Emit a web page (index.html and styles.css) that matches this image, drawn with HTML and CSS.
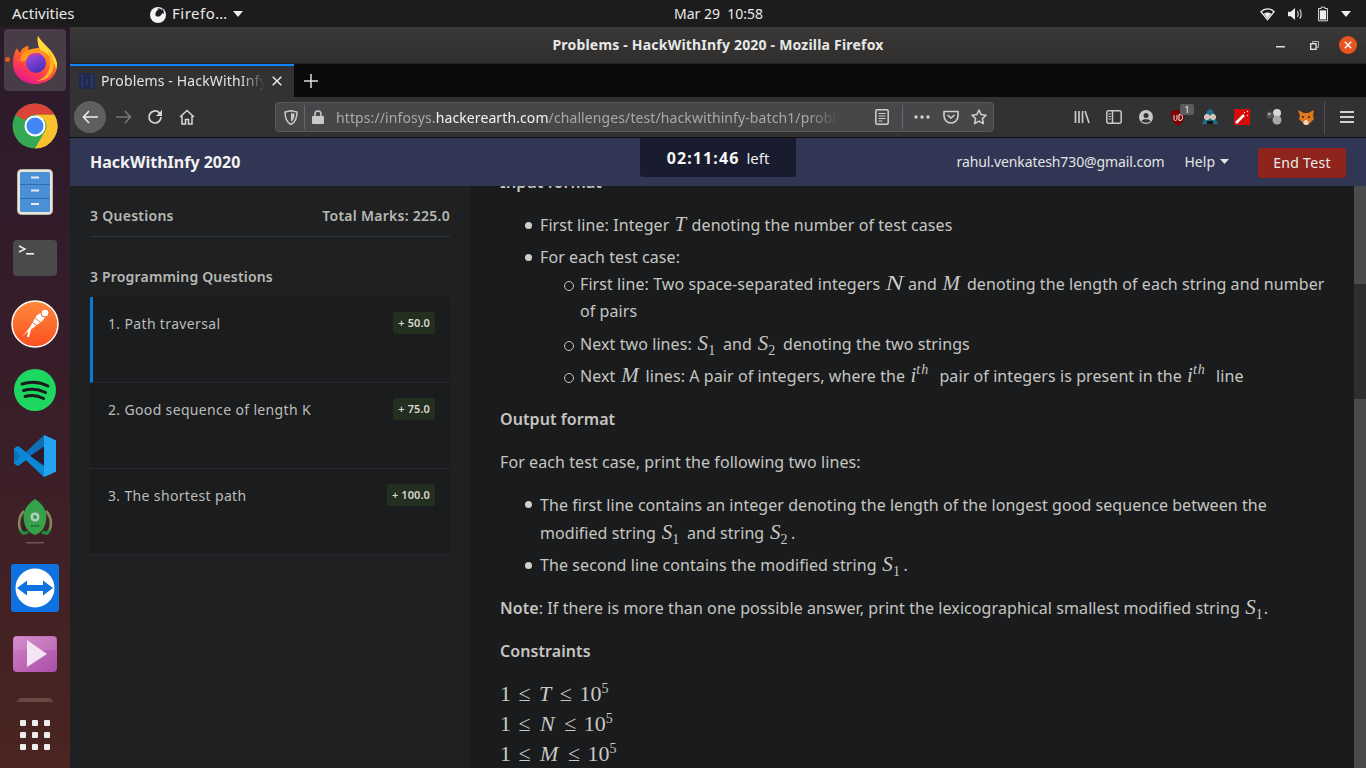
FILE: index.html
```html
<!DOCTYPE html>
<html lang="en">
<head>
<meta charset="utf-8">
<title>Problems - HackWithInfy 2020 - Mozilla Firefox</title>
<link rel="stylesheet" href="styles.css">
</head>
<body>
<header class="topbar">
  <div class="tb-left">
    <span class="tb-activities">Activities</span>
    <span class="tb-app">
      <svg width="20" height="20" viewBox="0 0 20 20"><circle cx="10" cy="11" r="8" fill="#f2f2f2"/><path d="M10 1c3 1 4 3 4 5-1-1-3-2-5-1l2 1c-2 0-3 1-3 3s2 3 3 3 3-1 3-3l2 1c0-3-1-5-3-6 0-1-1-2-3-4z" fill="#1d1d1d"/><circle cx="10" cy="10" r="2.6" fill="#1d1d1d"/></svg>
      <span class="tb-appname">Firefo…</span>
      <svg width="10" height="6" viewBox="0 0 10 6"><path d="M0 0h10L5 6z" fill="#eee"/></svg>
    </span>
  </div>
  <div class="tb-clock">Mar 29&nbsp; 10:58</div>
  <div class="tb-right">
    <svg width="15" height="14" viewBox="0 0 16 14"><path d="M1 4.500C3 2.500 5 1.500 8 1.500s5 1 7 3L8 13z" fill="none" stroke="#eee" stroke-width="1.500"/><path d="M4 6.500C5.500 5.700 6.500 5.300 8 5.300s2.500.4 4 1.200L8 11.500z" fill="#eee"/></svg>
    <svg width="15" height="14" viewBox="0 0 16 14"><path d="M0 4.500h3L7.500 .5v13L3 9.500H0z" fill="#eee"/><path d="M10 4c1.200 1.500 1.200 4.500 0 6M12.500 2c2 2.500 2 7.500 0 10" fill="none" stroke="#ddd" stroke-width="1.200"/></svg>
    <svg width="10" height="16" viewBox="0 0 11 16"><path d="M3.500 .5h4v1.500h3v13.500H.5V2h3z" fill="none" stroke="#eee"/><rect x="2" y="4" width="7" height="10" fill="#eee"/></svg>
    <svg width="10" height="6" viewBox="0 0 10 6"><path d="M0 0h10L5 6z" fill="#eee"/></svg>
  </div>
</header>

<div class="desktop">
  <nav class="dock">
    <div class="dock-list">
      <div class="dock-item dock-active">
        <span class="dock-dot"></span>
        <svg width="46" height="48" viewBox="0 0 46 48">
          <defs>
            <linearGradient id="ffa" x1="0.85" y1="0.05" x2="0.4" y2="1"><stop offset="0" stop-color="#ffb52a"/><stop offset=".45" stop-color="#ff7a1c"/><stop offset=".75" stop-color="#ff3a50"/><stop offset="1" stop-color="#e81a8c"/></linearGradient>
            <linearGradient id="ffb" x1="0.2" y1="0" x2="0.7" y2="1"><stop offset="0" stop-color="#9a4ce0"/><stop offset="1" stop-color="#4b2db8"/></linearGradient>
          </defs>
          <path d="M26 0C30 8 42 14 45 27 46 40 36 48 23 48 10 48 0 38 1 26 1 20 3 15 5 12 6 15 7 16 8 17 9 13 13 10 17 10 16 12 16 14 17 15 20 12 24 12 27 12 26 8 25 4 26 0z" fill="url(#ffa)"/>
          <path d="M26 0C30 8 42 14 45 27 45 29 45 31 44 33 42 22 34 16 28 14 26 9 25 4 26 0z" fill="#ffd83a"/>
          <path d="M36 14C42 20 44 30 39 38 36 43 30 45 25 45 33 42 38 36 38 28 38 22 37 18 36 14z" fill="#ffb224"/>
          <circle cx="24" cy="27" r="10" fill="url(#ffb)"/>
          <path d="M15 22C18 17 27 15 32 20 27 19 21 20 15 22z" fill="#c13ba8"/>
          <path d="M8 24C9 17 15 13 22 13 27 13 33 17 34 22 30 17 26 16 22 17 18 17 16 20 14 24 12 26 10 26 8 24z" fill="#ff9a1f"/>
        </svg>
      </div>
      <div class="dock-item">
        <svg width="46" height="46" viewBox="0 0 46 46">
          <circle cx="23" cy="23" r="22.500" fill="#34a853"/>
          <path d="M23 .5A22.500 22.500 0 0 1 42.500 11.750H23A11.250 11.250 0 0 0 13.300 17.400L3.500 11.900A22.500 22.500 0 0 1 23 .5z" fill="#db4437"/>
          <path d="M42.500 11.750A22.500 22.500 0 0 1 23 45.500L32.800 28.600A11.250 11.250 0 0 0 32.800 17.400L23 11.750z" fill="#fbc02d"/>
          <circle cx="23" cy="23" r="10.500" fill="#fff"/><circle cx="23" cy="23" r="8.500" fill="#4285f4"/>
        </svg>
      </div>
      <div class="dock-item">
        <svg width="36" height="46" viewBox="0 0 36 46">
          <rect x=".5" y=".5" width="35" height="45" rx="4" fill="#e9e5da" stroke="#bdb8aa"/>
          <rect x="3" y="3" width="30" height="40" rx="1.500" fill="#4a90d9"/>
          <path d="M3 15.500h30M3 29.500h30" stroke="#2f6cb0"/>
          <rect x="14" y="7.500" width="8" height="2" fill="#e6eef8"/><rect x="14" y="20.500" width="8" height="2" fill="#e6eef8"/><rect x="14" y="34" width="8" height="2" fill="#e6eef8"/>
        </svg>
      </div>
      <div class="dock-item">
        <svg width="44" height="36" viewBox="0 0 44 36">
          <rect width="44" height="36" rx="4" fill="#4a4a4a"/>
          <path d="M6 6l6 3-6 3" fill="none" stroke="#eee" stroke-width="1.400"/><rect x="13" y="13" width="8" height="1.600" fill="#eee"/>
        </svg>
      </div>
      <div class="dock-item">
        <svg width="48" height="48" viewBox="0 0 48 48">
          <defs><linearGradient id="pm" x1="0" y1="0" x2="0" y2="1"><stop offset="0" stop-color="#ff8a3c"/><stop offset="1" stop-color="#fb4f20"/></linearGradient></defs>
          <circle cx="24" cy="24" r="23" fill="url(#pm)" stroke="#fff" stroke-width="1.500"/>
          <path d="M11 37l8-10 5-9c2-4 6-6 10-5 1 3-1 7-4 9l-8 6-7 5z" fill="#fff"/>
          <circle cx="34" cy="13" r="4" fill="#fff" stroke="#fb6a2c"/>
          <path d="M21 22l7 5M24 18l6 5" stroke="#fb6a2c"/><path d="M19 29l-2 8" stroke="#fff" stroke-width="2"/>
        </svg>
      </div>
      <div class="dock-item">
        <svg width="42" height="42" viewBox="0 0 42 42">
          <circle cx="21" cy="21" r="21" fill="#1ed760"/>
          <path d="M8 15c8-2.500 18-2 26 2M9.500 21.500c7-2 15-1.500 22 2M11 27.500c6-1.500 13-1 18.500 2" fill="none" stroke="#1b1b1b" stroke-width="3" stroke-linecap="round"/>
        </svg>
      </div>
      <div class="dock-item">
        <svg width="42" height="42" viewBox="0 0 42 42">
          <path d="M30 0l12 5.500v31L30 42 12 25 4 31 0 28.500V13.500L4 11l8 6z" fill="#0f6fb8"/>
          <path d="M30 0l12 5.500v31L30 42z" fill="#24a3f2"/>
          <path d="M30 11.500L16 21l14 9.500z" fill="#2b1a2a"/>
          <path d="M0 13.500L4 11l26 21-0 10L12 25 4 31 0 28.500l6-7.500z" fill="#0b87d6"/>
        </svg>
      </div>
      <div class="dock-item">
        <svg width="36" height="46" viewBox="0 0 36 46">
          <path d="M7 12C1 18 0 30 7 35M29 12c6 6 7 18 0 23" fill="none" stroke="#7f8a5c" stroke-width="2.500"/>
          <path d="M18 0c8 5 13 13 11 22-1 7-5 12-11 14C12 34 8 29 7 22 5 13 10 5 18 0z" fill="#35a24a"/>
          <path d="M3 31c2 3 5 4 8 2M33 31c-2 3-5 4-8 2" fill="none" stroke="#1f8f3e" stroke-width="3"/>
          <circle cx="18" cy="18" r="5" fill="#a5d8b0" stroke="#5c8f6c"/><circle cx="18" cy="18" r="2" fill="#3d8f5a"/>
          <path d="M14 27h8" stroke="#1d5c2e" stroke-width="1.500" stroke-dasharray="2 1"/>
          <rect x="9" y="43" width="18" height="1.500" rx=".7" fill="#6d5560"/>
        </svg>
      </div>
      <div class="dock-item">
        <svg width="48" height="48" viewBox="0 0 48 48">
          <rect width="48" height="48" rx="3" fill="#0e72e0"/><circle cx="24" cy="24" r="19.500" fill="#fff"/>
          <path d="M6 24l10-7.500v4.500h16v-4.500L42 24l-10 7.500V27H16v4.500z" fill="#0e72e0"/>
        </svg>
      </div>
      <div class="dock-item">
        <svg width="44" height="36" viewBox="0 0 44 36">
          <defs><linearGradient id="vd" x1="0" y1="0" x2="1" y2="1"><stop offset="0" stop-color="#d381c6"/><stop offset="1" stop-color="#a94fa8"/></linearGradient></defs>
          <rect width="44" height="36" rx="4" fill="url(#vd)"/>
          <path d="M1 14h42V4a3 3 0 0 0-3-3H4a3 3 0 0 0-3 3z" fill="#fff" opacity=".1"/>
          <path d="M14 4l20 14-20 13z" fill="#f5e4f3"/>
        </svg>
      </div>
      <div class="dock-item"><span class="dock-sliver"></span></div>
    </div>
    <div class="dock-apps">
      <i></i><i></i><i></i><i></i><i></i><i></i><i></i><i></i><i></i>
    </div>
  </nav>

  <div class="window">
    <div class="titlebar">
      <span class="title">Problems - HackWithInfy 2020 - Mozilla Firefox</span>
      <div class="wincontrols">
        <svg width="9" height="2" viewBox="0 0 9 2"><rect width="9" height="1.500" fill="#ddd"/></svg>
        <svg width="9" height="9" viewBox="0 0 10 10"><path d="M3 2.500V.5h6.500V7H7.500" fill="none" stroke="#ccc"/><rect x=".75" y="3" width="6" height="6.250" fill="none" stroke="#eee" stroke-width="1.400"/></svg>
        <svg width="18" height="18" viewBox="0 0 18 18"><circle cx="9" cy="9" r="9" fill="#e95420"/><path d="M5.800 5.800l6.400 6.400M12.200 5.800l-6.400 6.400" stroke="#fff" stroke-width="1.500"/></svg>
      </div>
    </div>

    <div class="tabstrip">
      <div class="tab">
        <svg class="favicon" width="16" height="16" viewBox="0 0 16 16"><rect width="16" height="16" fill="#1f2a4d"/><path d="M4.500 2.500H3v11h1.500M11.500 2.500H13v11h-1.500M8 6v6" fill="none" stroke="#2f3d72" stroke-width="1.500"/></svg>
        <span class="tab-title">Problems - HackWithInfy 2020 - Mozilla</span>
        <svg width="10" height="10" viewBox="0 0 10 10"><path d="M.7.7l8.600 8.600M9.300.7L.7 9.300" stroke="#eee" stroke-width="1.400"/></svg>
      </div>
      <svg class="newtab" width="14" height="14" viewBox="0 0 14 14"><path d="M7 0v14M0 7h14" stroke="#ddd" stroke-width="1.500"/></svg>
    </div>

    <div class="toolbar">
      <span class="backbtn"><svg width="16" height="14" viewBox="0 0 16 14"><path d="M7 1L1.500 7 7 13M1.500 7H16" fill="none" stroke="#eee" stroke-width="1.600"/></svg></span>
      <span class="tbtn fwd"><svg width="16" height="14" viewBox="0 0 16 14"><path d="M9 1l5.500 6L9 13M14.500 7H0" fill="none" stroke="#77777a" stroke-width="1.600"/></svg></span>
      <span class="tbtn"><svg width="16" height="16" viewBox="0 0 16 16"><path d="M14 8a6 6 0 1 1-1.800-4.300L14 5.500" fill="none" stroke="#d8d8d8" stroke-width="1.700"/><path d="M15 1v6H9z" fill="#d8d8d8"/></svg></span>
      <span class="tbtn"><svg width="16" height="16" viewBox="0 0 16 16"><path d="M1 8l7-6.500L15 8M3 7v8h3.500v-4.500h3V15H13V7" fill="none" stroke="#d8d8d8" stroke-width="1.500"/></svg></span>
      <div class="urlbar">
        <svg class="shield" width="14" height="15" viewBox="0 0 14 15"><path d="M1 2l6-1.300L13 2c0 6-1 10-6 12.500C2 12 1 8 1 2z" fill="none" stroke="#c8c8c8" stroke-width="1.500"/><path d="M7 3l3.500.7c0 3.500-.5 6-3.500 8z" fill="#c8c8c8"/></svg>
        <span class="urlsep"></span>
        <svg class="lock" width="12" height="14" viewBox="0 0 12 14"><path d="M3 6V4a3 3 0 0 1 6 0v2" fill="none" stroke="#c8c8c8" stroke-width="1.600"/><rect y="6" width="12" height="8" rx="1" fill="#c8c8c8"/></svg>
        <span class="url">https://infosys.<b>hackerearth.com</b>/challenges/test/hackwithinfy-batch1/problems/</span>
        <svg class="ua-reader" width="14" height="16" viewBox="0 0 14 16"><rect x=".8" y=".8" width="12.400" height="14.400" rx="1.500" fill="none" stroke="#d0d0d0" stroke-width="1.500"/><path d="M3.500 4.500h7M3.500 7h7M3.500 9.500h7M3.500 12h4" stroke="#d0d0d0"/></svg>
        <span class="urlsep sep2"></span>
        <svg class="ua-dots" width="16" height="4" viewBox="0 0 16 4"><circle cx="2" cy="2" r="1.700" fill="#d0d0d0"/><circle cx="8" cy="2" r="1.700" fill="#d0d0d0"/><circle cx="14" cy="2" r="1.700" fill="#d0d0d0"/></svg>
        <svg class="ua-pocket" width="16" height="14" viewBox="0 0 16 14"><path d="M1 1.500h14V6a7 7 0 0 1-14 0z" fill="none" stroke="#d0d0d0" stroke-width="1.600" stroke-linejoin="round"/><path d="M4.500 5l3.500 3 3.500-3" fill="none" stroke="#d0d0d0" stroke-width="1.600"/></svg>
        <svg class="ua-star" width="16" height="16" viewBox="0 0 16 16"><path d="M8 1l2.100 4.600 4.900.6-3.600 3.400 1 5L8 12.100 3.600 14.600l1-5L1 6.200l4.900-.6z" fill="none" stroke="#d0d0d0" stroke-width="1.500" stroke-linejoin="round"/></svg>
      </div>
      <div class="tools">
        <span class="tbtn"><svg width="16" height="14" viewBox="0 0 16 14"><path d="M1.500 1v12M5 1v12M8.500 1v12M11 1l4 12" stroke="#c8c8c8" stroke-width="1.700" fill="none"/></svg></span>
        <span class="tbtn"><svg width="16" height="14" viewBox="0 0 16 14"><rect x=".8" y=".8" width="14.400" height="12.400" rx="2" fill="none" stroke="#c8c8c8" stroke-width="1.500"/><path d="M6.500 1v12" stroke="#c8c8c8" stroke-width="1.500"/><path d="M2.500 4h2.500M2.500 6.500h2.500M2.500 9h2.500" stroke="#c8c8c8"/></svg></span>
        <span class="tbtn"><svg width="14" height="14" viewBox="0 0 14 14"><circle cx="7" cy="7" r="7" fill="#c8c8c8"/><circle cx="7" cy="5.500" r="2.500" fill="#323234"/><path d="M2.500 11c1-2.500 8-2.500 9 0-2 2.200-7 2.200-9 0z" fill="#323234"/></svg></span>
        <span class="tbtn ublock"><svg width="14" height="16" viewBox="0 0 14 16"><path d="M0 1l7-1 7 1c0 8-2 12-7 15C2 13 0 9 0 1z" fill="#800000"/><path d="M3 5v4c0 2 3 2 3 0V5M8 4.500v6c3 0 3.500-1 3.500-3s-.5-3-3.500-3z" fill="none" stroke="#eee"/></svg><span class="badge-1">1</span></span>
        <span class="tbtn"><svg width="16" height="16" viewBox="0 0 16 16"><path d="M8 0c3 1 4 3 4 6l4 9H0l4-9c0-3 1-5 4-6z" fill="#1f6f86"/><circle cx="5" cy="8" r="2.500" fill="#e8b4a0" stroke="#ddd"/><circle cx="11" cy="8" r="2.500" fill="#e8b4a0" stroke="#ddd"/><rect x="5" y="12" width="6" height="3" fill="#111"/></svg></span>
        <span class="tbtn"><svg width="16" height="16" viewBox="0 0 16 16"><rect width="16" height="16" fill="#d80b0b"/><path d="M2 14l8-8" stroke="#fff" stroke-width="2.500"/><path d="M10 3l1 1M13 2l1 1M13 6l1 1" stroke="#fff"/></svg></span>
        <span class="tbtn"><svg width="16" height="16" viewBox="0 0 16 16"><circle cx="11" cy="4" r="4" fill="#d8d8d8"/><circle cx="11" cy="11" r="4.500" fill="#a8a8a8"/><circle cx="4" cy="6" r="3.500" fill="#555"/><circle cx="3.300" cy="5" r="1" fill="#ddd"/></svg></span>
        <span class="tbtn"><svg width="16" height="15" viewBox="0 0 16 15"><path d="M0 0l6 3h4l6-3-1 6 1 3-4 4-2 2H7l-2-2-4-4 1-3z" fill="#e2761b"/><path d="M5 13l2-3h2l2 3-2 2H7z" fill="#e8d5c4"/><circle cx="5" cy="7" r="1" fill="#222"/><circle cx="11" cy="7" r="1" fill="#222"/></svg></span>
        <span class="toolsep"></span>
        <span class="tbtn burger"><svg width="14" height="12" viewBox="0 0 14 12"><path d="M0 1h14M0 6h14M0 11h14" stroke="#d0d0d0" stroke-width="1.800"/></svg></span>
      </div>
    </div>

    <div class="page">
      <header class="site-header">
        <span class="brand">HackWithInfy 2020</span>
        <div class="timer"><b>02:11:46</b><span>left</span></div>
        <div class="site-right">
          <span class="email">rahul.venkatesh730@gmail.com</span>
          <span class="help">Help <svg width="9" height="5" viewBox="0 0 9 5"><path d="M0 0h9L4.500 5z" fill="#e4e4e4"/></svg></span>
          <button class="endtest">End Test</button>
        </div>
      </header>
      <div class="site-body">
        <aside class="sidebar">
          <div class="side-head"><span>3 Questions</span><span>Total Marks: 225.0</span></div>
          <h3 class="side-sub">3 Programming Questions</h3>
          <div class="qlist">
            <div class="q q-active"><span>1. Path traversal</span><span class="marks">+ 50.0</span></div>
            <div class="q"><span>2. Good sequence of length K</span><span class="marks">+ 75.0</span></div>
            <div class="q"><span>3. The shortest path</span><span class="marks">+ 100.0</span></div>
          </div>
        </aside>
        <main class="content">
          <div class="statement">
            <p class="head">Input format</p>
            <ul class="l1">
              <li>First line: Integer <i class="m">T</i> denoting the number of test cases</li>
              <li class="has-sub">For each test case:
                <ul class="l2">
                  <li class="wrap">First line: Two space-separated integers <i class="m wide">N</i> and <i class="m pm">M</i> denoting the length of each string and number of pairs</li>
                  <li>Next two lines: <i class="m pad">S<sub>1</sub></i> and <i class="m pad">S<sub>2</sub></i> denoting the two strings</li>
                  <li>Next <i class="m pm">M</i> lines: A pair of integers, where the <i class="m">i<sup>th</sup></i> pair of integers is present in the <i class="m">i<sup>th</sup></i> line</li>
                </ul>
              </li>
            </ul>
            <p class="head">Output format</p>
            <p>For each test case, print the following two lines:</p>
            <ul class="l1">
              <li class="wrap2">The first line contains an integer denoting the length of the longest good sequence between the modified string <i class="m pad">S<sub>1</sub></i> and string <i class="m pad">S<sub>2</sub></i>.</li>
              <li>The second line contains the modified string <i class="m pad">S<sub>1</sub></i>.</li>
            </ul>
            <p><b class="semi">Note</b>: If there is more than one possible answer, print the lexicographical smallest modified string <i class="m">S<sub>1</sub></i>.</p>
            <p class="head head-tight">Constraints</p>
            <div class="dm">1 ≤ <i>T</i> ≤ 10<sup>5</sup></div>
            <div class="dm">1 ≤ <i class="dmw">N</i> ≤ 10<sup>5</sup></div>
            <div class="dm">1 ≤ <i class="dmw">M</i> ≤ 10<sup>5</sup></div>
          </div>
        </main>
        <div class="scrollbar"><span class="sb-a"></span><span class="sb-b"></span><span class="sb-c"></span></div>
      </div>
    </div>
  </div>
</div>
</body>
</html>
```
FILE: styles.css
```css
* { box-sizing: border-box; }
html, body { margin: 0; height: 100%; }
body {
  width: 1366px; height: 768px; overflow: hidden;
  display: flex; flex-direction: column;
  font-family: "Noto Sans", sans-serif; background: #1b1c1e; color: #c6c6c1;
}
svg { display: block; flex: none; }

/* GNOME top bar */
.topbar {
  height: 27px; flex: none; background: #1c1c1c; color: #eaeaea;
  display: grid; grid-template-columns: 674px auto 1fr; align-items: center;
  font-size: 15px; font-family: "Noto Sans", sans-serif;
}
.tb-left { display: flex; align-items: center; padding-left: 12px; }
.tb-activities { width: 136px; margin-bottom: 2px; }
.tb-app { display: flex; align-items: center; gap: 4px; }
.tb-appname { letter-spacing: .5px; margin: 0 1px 2px 0; }
.tb-clock { font-size: 14px; }
.tb-right { display: flex; align-items: center; justify-content: flex-end; padding-right: 15px; }
.tb-right svg:nth-child(1) { margin-right: 13px; }
.tb-right svg:nth-child(2) { margin-right: 15px; }
.tb-right svg:nth-child(3) { margin-right: 13px; }

.desktop { flex: 1; display: flex; min-height: 0; }

/* dock */
.dock {
  width: 70px; flex: none; display: flex; flex-direction: column;
  background: linear-gradient(180deg, #2a1a2c 0%, #3a1e28 55%, #4a2520 100%);
}
.dock-list { flex: 1; min-height: 0; overflow: hidden; }
.dock-item {
  height: 66px; display: flex; align-items: center; justify-content: center;
  margin: 0 4px; position: relative;
}
.dock-active { height: 62px; margin: 2px 4px; background: #483c46; border-radius: 4px; }
.dock-dot {
  position: absolute; left: 1px; top: 28px; width: 5px; height: 5px;
  border-radius: 50%; background: #e95420;
}
.dock-sliver { width: 36px; height: 44px; border-radius: 5px; background: #6a4844; }
.dock-apps {
  height: 66px; flex: none; display: grid; justify-content: center;
  grid-template-columns: repeat(3, 6px); grid-auto-rows: 6px; gap: 6px; padding-top: 18px;
}
.dock-apps i { background: #eee; border-radius: 1px; }

/* Firefox chrome */
.window { flex: 1; min-width: 0; display: flex; flex-direction: column; }
.titlebar {
  height: 37px; flex: none; background: linear-gradient(#3a3937, #2f2e2d);
  border-bottom: 1px solid #222;
  display: flex; align-items: center; justify-content: center; position: relative;
}
.title { font-size: 14px; font-weight: 700; letter-spacing: .2px; color: #e8e8e8; margin-bottom: 2px; }
.wincontrols {
  position: absolute; right: 9px; top: 9px; display: flex; align-items: center;
}
.wincontrols svg:nth-child(1) { margin-right: 25px; margin-top: 4px; }
.wincontrols svg:nth-child(2) { margin-right: 20px; }
.tabstrip { height: 33px; flex: none; background: #0a0a0b; display: flex; align-items: stretch; }
.tab {
  width: 224px; background: #323234; border-top: 2px solid #0a84ff;
  display: flex; align-items: center; padding: 0 0 2px 9px; color: #e4e4e4; font-size: 14px;
}
.favicon { margin-right: 6px; }
.tab-title {
  width: 164px; white-space: nowrap; overflow: hidden; margin-right: 7px; letter-spacing: .15px;
  -webkit-mask-image: linear-gradient(90deg, #000 85%, transparent);
  mask-image: linear-gradient(90deg, #000 85%, transparent);
}
.newtab { align-self: center; margin-left: 10px; }
.toolbar {
  height: 41px; flex: none; background: #323234; border-bottom: 1px solid #0c0c0d;
  display: flex; align-items: center; padding-left: 4px;
}
.backbtn {
  width: 32px; height: 32px; border-radius: 50%; background: #5f5f61; flex: none;
  display: flex; align-items: center; justify-content: center; margin-right: 2px;
}
.tbtn { width: 32px; height: 32px; flex: none; display: flex; align-items: center; justify-content: center; position: relative; }
.fwd { margin-right: -1px; }
.urlbar {
  width: 719px; height: 30px; margin-left: 72px; background: #474749;
  border: 1px solid #58585a; border-radius: 4px; flex: none;
  display: flex; align-items: center; padding-left: 8px; color: #a8a8aa; font-size: 14px;
}
.urlsep { width: 1px; height: 24px; background: #5f6a72; margin: 0 7px 0 6px; flex: none; }
.url {
  width: 502px; white-space: nowrap; overflow: hidden; margin-left: 12px; flex: none; letter-spacing: .1px;
  -webkit-mask-image: linear-gradient(90deg, #000 94%, transparent);
  mask-image: linear-gradient(90deg, #000 94%, transparent);
}
.url b { font-weight: 400; color: #f4f4f4; }
.ua-reader { margin-left: 37px; }
.sep2 { margin: 0 11px 0 13px; }
.ua-pocket { margin-left: 13px; }
.ua-star { margin-left: 12px; }
.tools { display: flex; align-items: center; margin-left: 72px; }
.ublock svg { margin-top: 1px; }
.badge-1 {
  position: absolute; right: 0; top: 3px; width: 14px; height: 11px; border-radius: 2px;
  background: #5c5c5e; color: #eee; font-size: 9px; line-height: 11px; text-align: center;
}
.toolsep { width: 1px; height: 33px; background: #505052; margin: 0 1px 0 2px; flex: none; }
.burger { margin-left: 5px; }

/* page */
.page { flex: 1; min-height: 0; display: flex; flex-direction: column; }
.site-header {
  height: 48px; flex: none; background: #323655; color: #e4e4e4;
  display: flex; align-items: flex-start; position: relative; padding: 0 20px;
}
.brand { font-size: 16px; font-weight: 700; color: #f2f2f2; line-height: 48px; }
.timer {
  position: absolute; left: 570px; top: 0; width: 156px; height: 39px;
  background: #191b2e; border-radius: 0 0 3px 3px;
  display: flex; align-items: center; justify-content: center; gap: 7px; font-size: 15px; color: #ededed;
}
.timer b { font-size: 16px; letter-spacing: 1.100px; color: #f6f6f6; }
.site-right { margin-left: auto; display: flex; align-items: center; height: 48px; font-size: 14px; }
.email { margin: 0 20px 2px 0; letter-spacing: -.1px; }
.help { display: flex; align-items: center; gap: 5px; margin: 0 29px 2px 0; }
.endtest {
  width: 88px; height: 30px; margin-top: 1px; border: 0; border-radius: 3px; background: #8e241b;
  color: #ececec; font: 14px "Noto Sans", sans-serif; letter-spacing: .3px;
}
.site-body { flex: 1; min-height: 0; display: flex; }
.sidebar { width: 400px; flex: none; background: #1f2022; padding: 0 20px; color: #b8b8b3; }
.side-head {
  display: flex; justify-content: space-between; height: 51px; padding-top: 20px;
  line-height: 20px; font-size: 14px; font-weight: 600; letter-spacing: .27px; border-bottom: 1px solid #2e3338;
}
.side-sub { margin: 30px 0 10px; font-size: 14px; line-height: 20px; font-weight: 600; letter-spacing: .18px; }
.qlist { background: #1a1c1e; }
.q {
  height: 86px; display: flex; justify-content: space-between; align-items: flex-start;
  padding: 15px 15px 0 18px; font-size: 14px; line-height: 24px; color: #bdbdb8; letter-spacing: .35px;
  border-bottom: 1px solid #26282b;
}
.q-active { border-left: 3px solid #0b79d0; padding-left: 15px; }
.marks {
  height: 22px; line-height: 22px; padding: 0 5px; border-radius: 3px; letter-spacing: .1px;
  background: #23301f; color: #d8d8d2; font-size: 11px; font-weight: 600;
}
.content { flex: 1; min-width: 0; background: #1a1b1d; overflow: hidden; padding-left: 30px; padding-right: 28px; font-size: 16px; letter-spacing: .08px; }
.statement { margin-top: -17px; line-height: 27px; }
.statement p { margin: 0 0 16px; }
.head, .semi { font-weight: 600; }
.statement .head-tight { margin-bottom: 14px; }
.l1 { margin: 0 0 16px; padding-left: 40px; list-style: none; }
.l2 { margin: 0; padding-left: 40px; list-style: none; }
.l1 > li, .l2 > li { margin-bottom: 5px; position: relative; }
.l1 > li:last-child, .l2 > li:last-child { margin-bottom: 0; }
.l2 > .wrap { margin-bottom: 6px; }
.l1 > .wrap2 { line-height: 28px; margin-top: -1px; letter-spacing: .05px; }
.has-sub { margin-bottom: 0; }
.l1 > li::before {
  content: ""; position: absolute; left: -15px; top: 10px; width: 7px; height: 7px;
  border-radius: 50%; background: #d0d0cc;
}
.l2 > li::before {
  content: ""; position: absolute; left: -16px; top: 10px; width: 8px; height: 8px;
  border-radius: 50%; background: transparent; border: 1px solid #c8c8c4;
}
.m {
  font-family: "Liberation Serif", serif; font-style: italic; font-size: 21px;
  line-height: 0; padding: 0 1px; color: #c8c8c4;
}
.pad { padding: 0 2.500px 0 1.500px; }
.pm { padding: 0 2.500px 0 1.500px; }
.wide { display: inline-block; padding: 0 2.500px; transform: scaleX(1.3); }
.m sub, .m sup { font-size: 14px; font-style: normal; line-height: 0; }
.pad sub { margin-right: 1px; }
.m sup { font-style: italic; letter-spacing: 1px; margin-right: 5px; }
.dm {
  font-family: "Liberation Serif", serif; font-size: 22px; line-height: 30px;
  word-spacing: 2px; color: #c8c8c4; letter-spacing: 0;
}
.dm i { padding: 0 1px; }
.dm .dmw { padding: 0 2px; }
.dm sup { font-size: 14px; line-height: 0; }
.scrollbar { width: 12px; flex: none; display: flex; flex-direction: column; }
.sb-a { height: 98px; background: #4a4b4a; }
.sb-b { height: 115px; background: #2d2e2e; }
.sb-c { flex: 1; background: #4a4b4a; }
```
